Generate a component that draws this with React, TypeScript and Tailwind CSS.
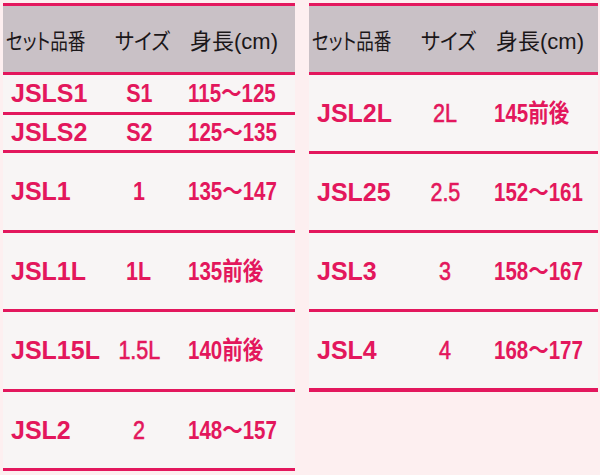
import React from "react";

type Row = { code: string; size: string; height: string; h: string; sizeBold: boolean; border?: string };

const leftRows: Row[] = [
  { code: "JSLS1", size: "S1", height: "115〜125", h: "h-[40px]", sizeBold: true },
  { code: "JSLS2", size: "S2", height: "125〜135", h: "h-[38px]", sizeBold: true },
  { code: "JSL1", size: "1", height: "135〜147", h: "h-[80px]", sizeBold: true },
  { code: "JSL1L", size: "1L", height: "135前後", h: "h-[79px]", sizeBold: true },
  { code: "JSL15L", size: "1.5L", height: "140前後", h: "h-[80px]", sizeBold: false },
  { code: "JSL2", size: "2", height: "148〜157", h: "h-[79px]", sizeBold: false },
];

const rightRows: Row[] = [
  { code: "JSL2L", size: "2L", height: "145前後", h: "h-[79px]", sizeBold: false },
  { code: "JSL25", size: "2.5", height: "152〜161", h: "h-[79px]", sizeBold: false },
  { code: "JSL3", size: "3", height: "158〜167", h: "h-[79px]", sizeBold: false },
  { code: "JSL4", size: "4", height: "168〜177", h: "h-[80px]", sizeBold: false, border: "border-b-[4px]" },
];

const font = { fontFamily: '"Liberation Sans", Arial, "Noto Sans CJK JP", sans-serif' };

function Table({ rows, width }: { rows: Row[]; width: string }) {
  return (
    <div className={`${width} flex flex-col`} style={font}>
      <div className="h-[3px] bg-[#e3175d]" />
      <div className="h-[69px] bg-[#c9c1c6] border-b-[3px] border-[#e3175d] grid grid-cols-[108px_56px_1fr] items-center pt-[5px] text-[22px] text-[#1b1719] [font-feature-settings:'palt']">
        <div className="pl-[3px] whitespace-nowrap">
          <span className="inline-block scale-x-[0.8] origin-left">セット品番</span>
        </div>
        <div className="pl-[4px] whitespace-nowrap">
          <span className="inline-block scale-x-[0.92] origin-left">サイズ</span>
        </div>
        <div className="pl-[23px] whitespace-nowrap">身長(cm)</div>
      </div>
      {rows.map((r) => (
        <div
          key={r.code}
          className={`${r.h} bg-[#f8f5f5] ${r.border ?? "border-b-[3px]"} border-[#e3175d] grid grid-cols-[108px_56px_1fr] items-center text-[25px] text-[#e3175c] leading-none`}
        >
          <div className="pl-[8px] font-bold whitespace-nowrap">{r.code}</div>
          <div className="flex justify-center whitespace-nowrap">
            <span
              className={`inline-block scale-x-[0.86] origin-center ${r.sizeBold ? "font-bold" : "font-normal [-webkit-text-stroke:0.6px_#e3175c]"}`}
            >
              {r.size}
            </span>
          </div>
          <div className="pl-[21px] whitespace-nowrap">
            <span className="inline-block scale-x-[0.82] origin-left font-bold">{r.height}</span>
          </div>
        </div>
      ))}
    </div>
  );
}

export default function App() {
  return (
    <div className="w-[600px] h-[475px] bg-[#fdeff0] overflow-hidden">
      <div className="flex pt-[3px] pl-[3px] gap-[14px] items-start">
        <Table rows={leftRows} width="w-[292px]" />
        <Table rows={rightRows} width="w-[289px]" />
      </div>
    </div>
  );
}
